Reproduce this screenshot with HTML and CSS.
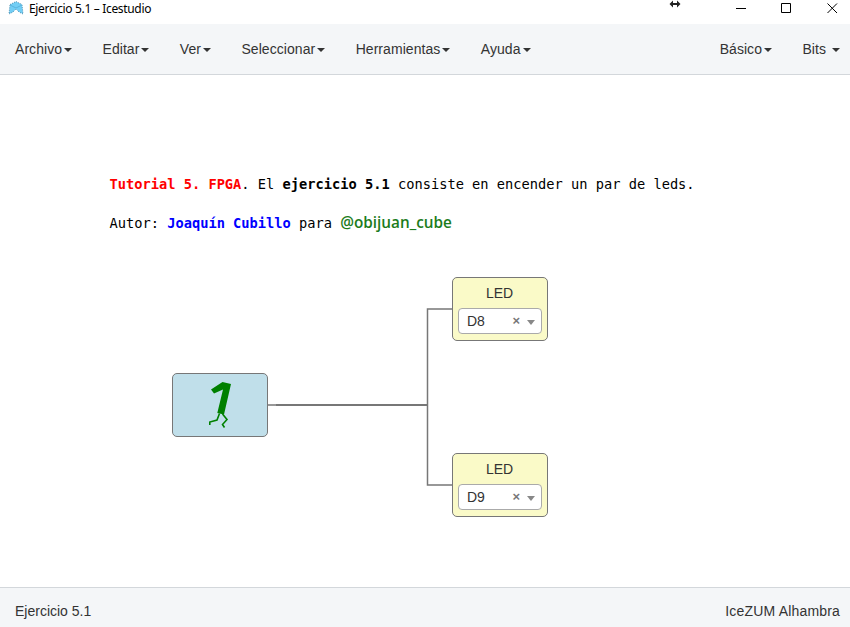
FILE: index.html
```html
<!DOCTYPE html>
<html lang="es">
<head>
<meta charset="utf-8">
<title>Ejercicio 5.1 – Icestudio</title>
<link rel="stylesheet" href="styles.css">
</head>
<body>
<header class="titlebar">
  <svg class="logo" width="16" height="14" viewBox="0 0 16 14">
    <path d="M5 2 8 .5 11 2 14 3.500 15 13 11 11 8 8 5 11 1 13 2 3.500Z" fill="#72cef5"/>
    <path d="M2 3.500 5 2 8 .5 11 2 14 3.500 15 13 11 11 8 8 5 11 1 13Z" fill="none" stroke="#286b91" stroke-width=".7" stroke-dasharray="1 1.300"/>
    <path d="M3 4.500 8 7 13 4.500" fill="none" stroke="#4199c4" stroke-width=".5"/>
  </svg>
  <span class="title">Ejercicio 5.1 – Icestudio</span>
  <svg class="resize" width="12" height="8" viewBox="0 0 12 8"><path d="M0.500 4 4 .5V3h4V.5L11.500 4 8 7.500V5H4v2.500Z" fill="#222"/></svg>
  <svg class="controls" width="104" height="14" viewBox="0 0 104 14" fill="none" stroke="#000">
    <path d="M0 7.500h10M45.500 2.500h9v9h-9ZM91.500 2.500l9.500 9.500M101 2.500l-9.500 9.500"/>
  </svg>
</header>
<nav class="menu">
  <a>Archivo<i class="caret"></i></a>
  <a>Editar<i class="caret"></i></a>
  <a>Ver<i class="caret"></i></a>
  <a>Seleccionar<i class="caret"></i></a>
  <a>Herramientas<i class="caret"></i></a>
  <a>Ayuda<i class="caret"></i></a>
  <a class="right">Básico<i class="caret"></i></a>
  <a class="bits">Bits<i class="caret"></i></a>
</nav>
<main class="canvas">
  <div class="note">
    <p><b class="red">Tutorial 5. FPGA</b>. El <b>ejercicio 5.1</b> consiste en encender un par de leds.</p>
    <p>Autor: <b class="blue">Joaquín Cubillo</b> para <span class="handle">@obijuan_cube</span></p>
  </div>
  <svg class="wires" width="850" height="512" viewBox="0 75 850 512" fill="none" stroke="#777">
    <path d="M268 405H427.500M452 309H427.500V485H452" stroke-width="1.500"/>
    <path d="M276 405H427" stroke-width="2"/>
  </svg>
  <section class="block one">
    <svg width="94" height="62" viewBox="173 374 94 62">
      <path d="M211 389.500 222.500 382 231 384 224 414.500 217.300 413 223 389.500 214 393.500Z" fill="green"/>
      <path d="M219.500 413.500 217 420 209.800 422V425M222.500 414 227 419.500 222.500 424.500 224.500 427.500" fill="none" stroke="green" stroke-width="1.600"/>
    </svg>
  </section>
  <section class="block led first">
    <div class="label">LED</div>
    <div class="select"><span>D8</span><b>×</b><i></i></div>
  </section>
  <section class="block led second">
    <div class="label">LED</div>
    <div class="select"><span>D9</span><b>×</b><i></i></div>
  </section>
</main>
<footer class="footer"><span>Ejercicio 5.1</span><span class="board">IceZUM Alhambra</span></footer>
</body>
</html>
```
FILE: styles.css
```css
* { box-sizing: border-box; }
body {
  margin: 0;
  width: 850px;
  height: 627px;
  display: flex;
  flex-direction: column;
  overflow: hidden;
  background: #fff;
  color: #333;
  font: 14px/20px "Liberation Sans", Arial, sans-serif;
}
.titlebar {
  height: 24px;
  display: flex;
  align-items: flex-start;
  padding: 1px 10px 0 8px;
  color: #000;
}
.title {
  margin-left: 5px;
  font: 12px/16px "Noto Sans", sans-serif;
  letter-spacing: -0.33px;
  white-space: nowrap;
}
.resize { margin: -1px 55px 0 auto; }
.menu {
  height: 51px;
  display: flex;
  padding: 15px 10px 0 15px;
  gap: 30.4px;
  background: #f4f6f8;
  border-bottom: 1px solid #d3d7db;
  letter-spacing: 0.06px;
}
.menu a { display: flex; white-space: nowrap; }
.menu .right { margin-left: auto; }
.caret {
  width: 8px;
  height: 4px;
  margin-top: 9px;
  margin-left: 2px;
  border: 4px solid transparent;
  border-top-color: #333;
  border-bottom: 0;
}
.bits .caret { margin-left: 6px; }
.canvas { height: 512px; position: relative; }
.note {
  padding: 99px 0 0 109.5px;
  color: #000;
  font: 13.7px/20px "DejaVu Sans Mono", monospace;
  white-space: nowrap;
}
.note p { margin: 0 0 19px; height: 20px; }
.note p + p { margin-top: -1px; padding-top: 0; }
.red { color: #f00; }
.blue { color: #00f; }
.handle {
  color: #1c7c1c;
  font: 600 15.3px/20px "Open Sans", sans-serif;
}
.wires { position: absolute; left: 0; top: 0; }
.block {
  position: absolute;
  width: 96px;
  height: 64px;
  border: 1px solid #777;
  border-radius: 5px;
}
.block svg { display: block; }
.one { left: 172px; top: 298px; background: #c0dfea; }
.led { left: 452px; padding: 5px; background: #fafac8; }
.first { top: 202px; }
.second { top: 378px; }
.label { height: 25px; padding-right: 1px; text-align: center; }
.select {
  height: 26px;
  display: flex;
  align-items: center;
  padding: 0 6px 0 8px;
  background: #fff;
  border: 1px solid #aaa;
  border-radius: 4px;
}
.select span { margin: -1px auto 0 0; }
.select b { color: #777; font-size: 13px; }
.select i {
  margin: 3px 0 0 7px;
  border: 4px solid transparent;
  border-top: 5px solid #888;
  border-bottom: 0;
}
.footer {
  height: 40px;
  display: flex;
  justify-content: space-between;
  padding: 13px 10px 0 15px;
  background: #f4f6f8;
  border-top: 1px solid #d3d7db;
}
.board { letter-spacing: 0.18px; }
```
